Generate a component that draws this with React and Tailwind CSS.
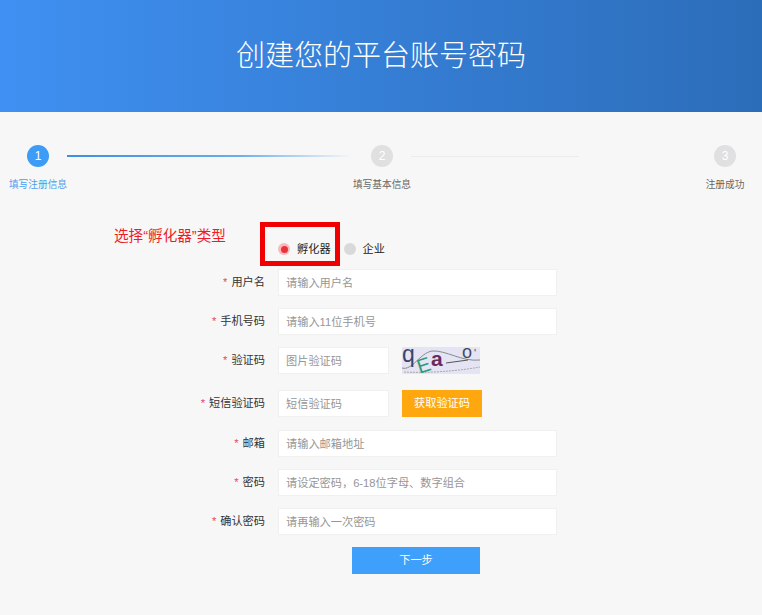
import React from "react";

const fields = [
  { label: "用户名", placeholder: "请输入用户名", mt: "mt-[3px]" },
  { label: "手机号码", placeholder: "请输入11位手机号", mt: "mt-3" },
  { label: "验证码", placeholder: "图片验证码", mt: "mt-3", extra: "captcha" },
  { label: "短信验证码", placeholder: "短信验证码", mt: "mt-[16px]", extra: "sms" },
  { label: "邮箱", placeholder: "请输入邮箱地址", mt: "mt-[13px]" },
  { label: "密码", placeholder: "请设定密码，6-18位字母、数字组合", mt: "mt-3" },
  { label: "确认密码", placeholder: "请再输入一次密码", mt: "mt-3" },
];

const Captcha = () => (
  <svg width="78" height="27" viewBox="0 0 78 27" className="ml-[13px] shrink-0">
    <rect width="78" height="27" fill="#e4e4f4" />
    <path d="M0 21 C10 24 18 6 30 4 C44 3 60 15 78 13" stroke="#8a8a8a" strokeWidth="1" fill="none" />
    <path d="M2 25 C20 26 50 25 78 20" stroke="#a9a9a9" strokeWidth="1" fill="none" strokeDasharray="2 1" />
    <path d="M44 16 L66 13" stroke="#555" strokeWidth="1" fill="none" />
    <text x="0" y="15" fontSize="23" fill="#39456b" fontFamily="Liberation Sans">q</text>
    <text x="15" y="25" fontSize="20" fill="#2f9a78" transform="rotate(-18 22 18)" fontFamily="Liberation Sans">E</text>
    <text x="29" y="19" fontSize="21" fontWeight="bold" fill="#6b2a5e" fontFamily="Liberation Sans">a</text>
    <text x="60" y="11" fontSize="18" fill="#444c63" fontFamily="Liberation Sans">o</text>
    <text x="72" y="10" fontSize="11" fill="#444c63" fontFamily="Liberation Sans">'</text>
  </svg>
);

const FormRow = ({ label, placeholder, mt, extra }) => (
  <div className={`flex items-center ${mt}`}>
    <label className="w-[265px] shrink-0 text-right text-[11.2px] text-[#333] whitespace-nowrap">
      <span className="text-[#e8476a] mr-1">*</span>
      {label}
    </label>
    <input
      readOnly
      placeholder={placeholder}
      className={`ml-[13px] h-[27px] bg-white border border-[#f0f0f0] px-[7px] text-[11.2px] outline-none placeholder:text-[#969696] ${
        extra ? "w-[111px]" : "w-[279px]"
      }`}
    />
    {extra === "captcha" && <Captcha />}
    {extra === "sms" && (
      <button className="ml-[13px] w-[80px] h-[27px] bg-[#ffa70f] text-white text-[11.2px]">获取验证码</button>
    )}
  </div>
);

const Step = ({ n, label, active, width }) => (
  <div className={`flex flex-col items-center shrink-0 ${width}`}>
    <div
      className={`w-[22px] h-[22px] rounded-full flex items-center justify-center text-[12px] text-white ${
        active ? "bg-[#3d9cf5]" : "bg-[#e0e0e0]"
      }`}
    >
      {n}
    </div>
    <div className={`mt-[11px] text-[9.7px] leading-[14px] whitespace-nowrap ${active ? "text-[#4a9ff0]" : "text-[#666]"}`}>
      {label}
    </div>
  </div>
);

export default function App() {
  return (
    <div
      className="relative w-[762px] h-[615px] overflow-hidden bg-[#f7f7f7]"
      style={{ fontFamily: '"Liberation Sans", "Noto Sans CJK SC", sans-serif' }}
    >
      <header className="h-[112px] bg-gradient-to-r from-[#3f90f2] to-[#2c6db9] flex items-center justify-center pt-[2px]">
        <h1 className="text-[29px] font-light text-white">创建您的平台账号密码</h1>
      </header>

      <div className="flex items-start pl-[9px] pt-[33px]">
        <Step n="1" label="填写注册信息" active width="w-[58px]" />
        <div className="h-[2px] w-[286px] mt-[10px] bg-gradient-to-r from-[#3d8fe0] via-[#6aaeea] via-60% to-[#f7f7f7]" />
        <Step n="2" label="填写基本信息" width="w-[58px]" />
        <div className="h-[1px] w-[168px] mt-[11px] bg-[#ececec]" />
        <div className="ml-[127px]">
          <Step n="3" label="注册成功" width="w-[38px]" />
        </div>
      </div>

      <div className="flex items-center h-[14px] pl-[278px] mt-[50px] text-[11.2px] text-[#222]">
        <span className="w-[12px] h-[12px] rounded-full bg-[#f9b9bd] flex items-center justify-center">
          <span className="w-[7px] h-[7px] rounded-full bg-[#e8333a]" />
        </span>
        <span className="ml-[7px]">孵化器</span>
        <span className="ml-[13px] w-[12px] h-[12px] rounded-full bg-[#d9d9d9]" />
        <span className="ml-[7px]">企业</span>
      </div>

      <form>
        <div className="mt-[13px]">
          {fields.map((f) => (
            <FormRow key={f.label} {...f} />
          ))}
        </div>
        <div className="pl-[352px] mt-[12px]">
          <button type="button" className="w-[128px] h-[27px] bg-[#3fa0fb] text-white text-[11.2px]">
            下一步
          </button>
        </div>
      </form>

      {/* annotation drawn on top of the screenshot */}
      <div className="absolute left-[114px] top-[227px] text-[14.6px] leading-[18px] text-[#ee1c25] whitespace-nowrap">
        选择“孵化器”类型
      </div>
      <div className="absolute left-[260px] top-[222px] w-[80px] h-[44px] border-[5px] border-[#f00000]" />
    </div>
  );
}
